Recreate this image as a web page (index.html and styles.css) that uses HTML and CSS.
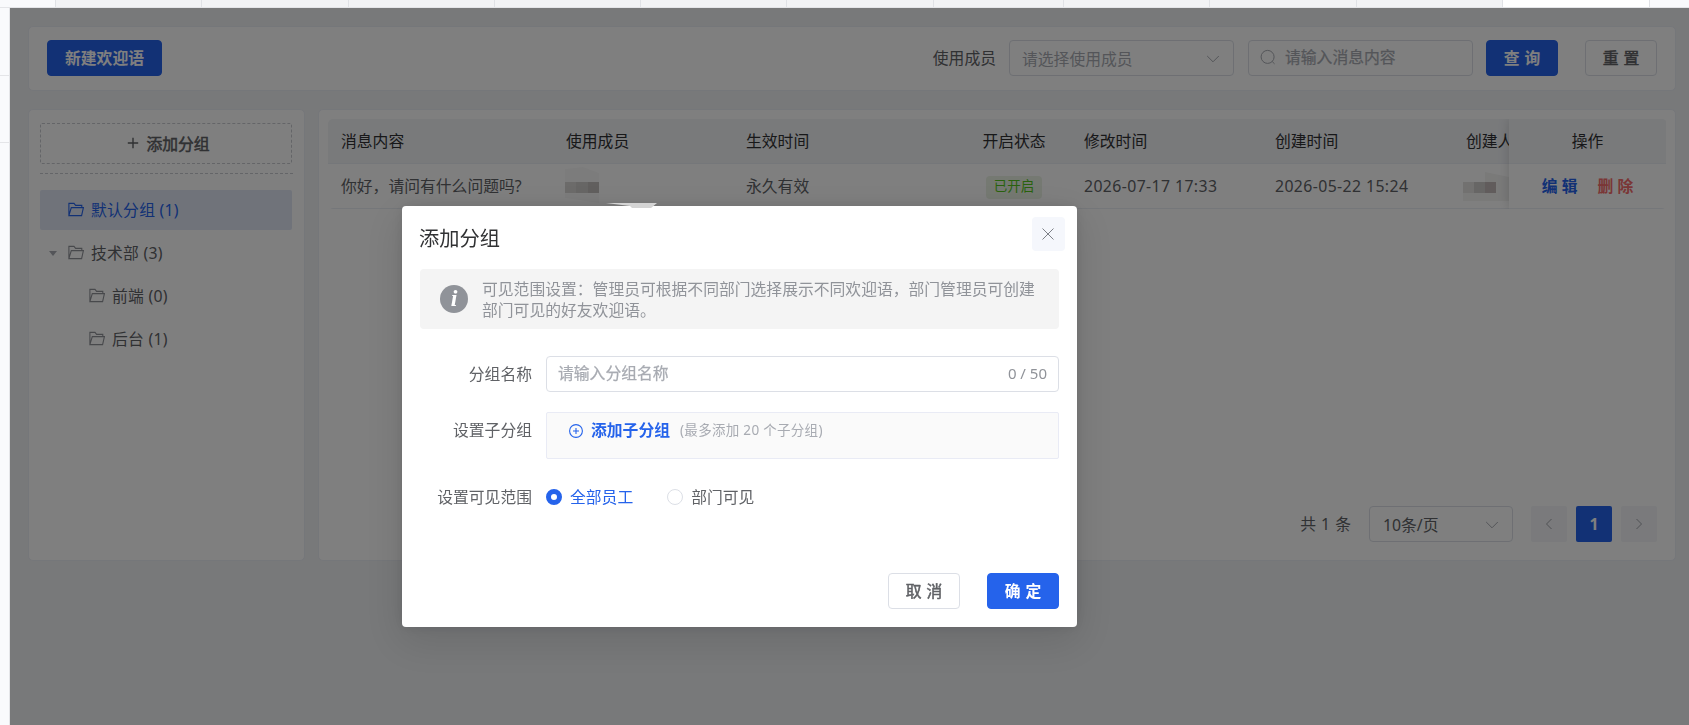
FILE: index.html
```html
<!DOCTYPE html>
<html lang="zh-CN">
<head>
  <meta charset="UTF-8">
  <title>好友欢迎语</title>
  <meta name="viewport" content="width=device-width, initial-scale=1.0">
  <link rel="stylesheet" href="styles.css">
</head>
<body>

  <svg class="sprite" width="0" height="0">
    <symbol id="folder" viewBox="0 0 16 16">
      <path d="M2.6 13.6 H.9 V1.4 H6 L7.6 3.4 H13.8 V5.2 M.9 13.6 L3.3 5.6 H15.4 L13.6 13.6 Z" fill="none" stroke="currentColor" stroke-width="1.1"/>
    </symbol>
    <symbol id="down" viewBox="0 0 14 14">
      <path d="M1.2 4 L7 9.8 L12.8 4" fill="none" stroke="currentColor"/>
    </symbol>
  </svg>

  <div class="tabs">
    <span class="w55 light"></span><span class="w146"></span><span class="w147"></span><span class="w146"></span><span class="w146"></span><span class="w146"></span><span class="w147"></span><span class="w130"></span><span class="w146"></span><span class="w147"></span><span class="w146"></span><span class="w147 active"></span><span class="rest light"></span>
  </div>

  <div class="layout">
    <aside class="rail"><i></i><i></i></aside>

    <main>
      <section class="card search">
        <button class="btn primary">新建欢迎语</button>
        <div class="filters">
          <label>使用成员</label>
          <div class="input select"><span>请选择使用成员</span><svg class="arrow"><use href="#down"/></svg></div>
          <div class="input keyword">
            <svg class="magnifier" viewBox="0 0 16 16"><circle cx="7.6" cy="7.9" r="6.5" fill="none" stroke="currentColor"/><path d="M12.2 12.5 L14.6 14.9" stroke="currentColor"/></svg>
            <span>请输入消息内容</span>
          </div>
          <button class="btn primary two">查 询</button>
          <button class="btn two reset">重 置</button>
        </div>
      </section>

      <div class="content">
        <section class="card groups">
          <button class="add"><svg viewBox="0 0 12 12"><path d="M6 .8 V11.2 M.8 6 H11.2" stroke="currentColor" stroke-width="1.4"/></svg>添加分组</button>
          <hr>
          <ul class="tree">
            <li class="current"><svg><use href="#folder"/></svg>默认分组 (1)</li>
            <li><b class="caret"></b><svg><use href="#folder"/></svg>技术部 (3)</li>
            <li class="child"><svg><use href="#folder"/></svg>前端 (0)</li>
            <li class="child"><svg><use href="#folder"/></svg>后台 (1)</li>
          </ul>
        </section>

        <section class="card list">
          <div class="table">
            <div class="scroll">
              <div class="tr th">
                <span>消息内容</span><span>使用成员</span><span>生效时间</span><span class="center">开启状态</span><span>修改时间</span><span>创建时间</span><span>创建人</span>
              </div>
              <div class="tr">
                <span>你好，请问有什么问题吗?</span>
                <span><svg class="mosaic" width="34" height="38"><path d="M0 2 L18 0 L34 6 V36 L0 31 Z" fill="#f9f9f9"/><path d="M0 15 H11 V26 H0 Z" fill="#d8d7d5"/><path d="M11 15 H23 V26 H11 Z" fill="#cecdca"/><path d="M23 15 H34 V26 H23 Z" fill="#c2bfbc"/></svg></span>
                <span>永久有效</span>
                <span class="center"><em class="tag">已开启</em></span>
                <span class="date">2026-07-17 17:33</span>
                <span class="date">2026-05-22 15:24</span>
                <span><svg class="mosaic creator" width="46" height="38"><path d="M0 15 H22 V5 L46 10 V34 H0 Z" fill="#f4f4f3"/><path d="M0 15 H11 V26 H0 Z" fill="#e4e2e1"/><path d="M11 15 H22 V26 H11 Z" fill="#cfcccb"/><path d="M22 15 H33 V26 H22 Z" fill="#c2b8b8"/></svg></span>
              </div>
            </div>
            <div class="fixed">
              <div class="tr th"><span>操作</span></div>
              <div class="tr"><a class="edit">编 辑</a><a class="del">删 除</a></div>
            </div>
          </div>

          <div class="pagination">
            <span class="total">共 1 条</span>
            <div class="input size"><span>10条/页</span><svg class="arrow"><use href="#down"/></svg></div>
            <button class="page"><svg viewBox="0 0 12 12"><path d="M8.5 1 L3.5 6 L8.5 11" fill="none" stroke="currentColor"/></svg></button>
            <button class="page on">1</button>
            <button class="page"><svg viewBox="0 0 12 12"><path d="M3.5 1 L8.5 6 L3.5 11" fill="none" stroke="currentColor"/></svg></button>
          </div>
        </section>
      </div>
    </main>
  </div>

  <div class="mask">
    <div class="dialog">
      <svg class="smudge" width="52" height="6"><path d="M0 0 H51 L45 5 H26 L24 3 Z" fill="#d4d4d4"/></svg>
      <header>
        <h2>添加分组</h2>
        <button class="close"><svg viewBox="0 0 12 12"><path d="M.5 .5 L11.5 11.5 M11.5 .5 L.5 11.5" stroke="currentColor"/></svg></button>
      </header>

      <div class="alert">
        <i class="info">i</i>
        <p>可见范围设置：管理员可根据不同部门选择展示不同欢迎语，部门管理员可创建部门可见的好友欢迎语。</p>
      </div>

      <div class="field name">
        <label>分组名称</label>
        <div class="input"><span>请输入分组名称</span><small>0 / 50</small></div>
      </div>
      <div class="field sub">
        <label>设置子分组</label>
        <div class="box">
          <svg viewBox="0 0 14 14"><circle cx="7" cy="7" r="6.4" fill="none" stroke="currentColor" stroke-width="1.1"/><path d="M7 4 V10 M4 7 H10" stroke="currentColor" stroke-width="1.1"/></svg>
          <b>添加子分组</b><small>(最多添加 20 个子分组)</small>
        </div>
      </div>
      <div class="field scope">
        <label>设置可见范围</label>
        <span class="radio checked"><i></i>全部员工</span>
        <span class="radio"><i></i>部门可见</span>
      </div>

      <footer>
        <button class="btn two">取 消</button>
        <button class="btn primary two">确 定</button>
      </footer>
    </div>
  </div>

</body>
</html>
```

FILE: styles.css
```css
* {
  box-sizing: border-box;
}
body {
  margin: 0;
  height: 725px;
  overflow: hidden;
  font-family: "Noto Sans", "Noto Sans CJK SC", sans-serif;
  font-size: 15.8px;
  line-height: 22px;
  color: #606266;
  background: #f0f2f5;
}
button {
  font-family: inherit;
  font-size: inherit;
  padding: 0;
}
svg {
  flex: none;
}
.sprite {
  position: absolute;
}

/* tab strip and menu rail */
.tabs {
  display: flex;
  height: 8px;
  border-bottom: 1px solid #e4e5e8;
}
.tabs span {
  border-right: 1px solid #e0e2e6;
  background: #f2f3f5;
}
.tabs .light { background: #f9fafc; }
.tabs .active { background: #fff; }
.w55 { width: 56px; }
.w130 { width: 130px; }
.w146 { width: 146px; }
.w147 { width: 147px; }
.tabs .rest {
  flex: 1;
  border-right: none;
}
.layout {
  display: flex;
  height: 717px;
}
.rail {
  width: 10px;
  flex: none;
  background: #f9fafc;
  border-right: 1px solid #e4e5e8;
}
.rail i {
  display: block;
  height: 67px;
  border-bottom: 1px solid #e4e5e8;
}
.rail i:first-child { height: 68px; }

main {
  flex: 1;
  padding: 18px 13px 0 18px;
}
.card {
  background: #fff;
  border: 1px solid #ebeef5;
  border-radius: 5px;
}
.search {
  height: 65px;
  padding: 0 18px 2px;
  display: flex;
  align-items: center;
  justify-content: space-between;
}
.filters {
  display: flex;
  align-items: center;
}
.filters label {
  margin-right: 13px;
}
.btn {
  height: 36px;
  border: 1px solid #dcdfe6;
  border-radius: 4px;
  background: #fff;
  color: #606266;
  -webkit-text-stroke: 0.5px;
  padding: 0 17px 1px;
}
.btn.primary {
  background: #2563eb;
  border-color: #2563eb;
  color: #fff;
  font-weight: 700;
  -webkit-text-stroke: 0;
}
.btn.two {
  width: 72px;
  padding: 0 0 1px;
  word-spacing: 1px;
}
.dialog .btn.two { padding-bottom: 2px; }
.btn.reset {
  margin-left: 27px;
}
.input {
  display: flex;
  align-items: center;
  height: 36px;
  border: 1px solid #dcdfe6;
  border-radius: 4px;
  padding: 0 11px 1px;
  color: #a8abb2;
  background: #fff;
}
.arrow {
  width: 14px;
  height: 14px;
  margin-left: auto;
}
.select {
  width: 225px;
  padding: 2px 13px 0 12px;
}
.keyword {
  width: 225px;
  margin: 0 13px 0 14px;
}
.keyword span {
  -webkit-text-stroke: 0.25px;
}
.magnifier {
  width: 16px;
  height: 16px;
  margin-right: 9px;
}

.content {
  display: flex;
  gap: 13px;
  margin-top: 18px;
}
.groups {
  width: 277px;
  height: 452px;
  padding: 13px 11px;
}
.add {
  display: flex;
  align-items: center;
  justify-content: center;
  gap: 7px;
  width: 252px;
  height: 41px;
  padding: 0 0 1px 5px;
  border: 1px dashed #c8cad0;
  border-radius: 2px;
  background: #fff;
  color: #606266;
  -webkit-text-stroke: 0.5px;
}
.add svg {
  width: 12px;
  height: 12px;
}
.groups hr {
  border: none;
  border-top: 1px dashed #c8cad0;
  margin: 9px 0 16px;
}
.tree {
  list-style: none;
  margin: 0;
  padding: 0;
}
.tree li {
  position: relative;
  display: flex;
  align-items: center;
  gap: 7px;
  width: 252px;
  height: 40px;
  margin-bottom: 3px;
  padding-left: 28px;
  border-radius: 2px;
  letter-spacing: 0.25px;
}
.tree svg {
  width: 16px;
  height: 16px;
  color: #909399;
}
.tree .current {
  background: #e1e7f5;
  color: #2563eb;
}
.tree .current svg { color: #2563eb; }
.tree .child { padding-left: 49px; }
.caret {
  position: absolute;
  left: 9px;
  border: 4.5px solid transparent;
  border-top: 5px solid #a8abb2;
  border-bottom: none;
}

.list {
  flex: 1;
  min-width: 0;
  height: 452px;
  padding: 9px 8px 8px 9px;
  display: flex;
  flex-direction: column;
  justify-content: space-between;
}
.table {
  display: flex;
  border-radius: 5px;
  overflow: hidden;
}
.scroll {
  width: 1181px;
  overflow: hidden;
}
.scroll .tr {
  display: grid;
  grid-template-columns: 225px 180px 224px 114px 191px 191px 120px;
}
.tr {
  height: 45px;
  align-items: center;
  border-bottom: 1px solid #ebeef5;
}
.tr > span {
  padding-left: 13px;
  white-space: nowrap;
}
.tr .center {
  padding: 0;
  text-align: center;
}
.th {
  background: #f2f4f7;
  color: #303133;
}
.date { letter-spacing: 0.4px; }
.fixed {
  width: 157px;
  box-shadow: 0 0 11px rgba(0, 0, 0, 0.16);
  clip-path: inset(0 0 0 -12px);
}
.fixed .tr {
  display: flex;
  justify-content: center;
  gap: 20px;
}
.fixed .tr > span { padding: 0; }
.fixed a {
  font-weight: 700;
}
.edit { color: #2563eb; }
.del {
  color: #f56c6c;
}
.mosaic {
  display: block;
  margin-left: -1px;
}
.creator { margin-left: -3px; }
.tag {
  display: inline-block;
  height: 23px;
  line-height: 21px;
  padding: 0 8px;
  border-radius: 4px;
  background: #ebf3e4;
  color: #52c41a;
  font-size: 13.5px;
  font-style: normal;
}

.pagination {
  display: flex;
  align-items: center;
  justify-content: flex-end;
  padding: 0 10px 10px 0;
}
.total {
  margin-right: 18px;
  word-spacing: 1px;
}
.size {
  width: 144px;
  margin-right: 18px;
  padding: 1px 13px 0;
}
.size span { color: #606266; }
.page {
  width: 36px;
  height: 36px;
  margin-left: 9px;
  border: none;
  border-radius: 2px;
  background: #f4f5f8;
  color: #a0a3aa;
  font-weight: 700;
}
.size + .page { margin-left: 0; }
.page svg {
  width: 12px;
  height: 12px;
}
.page.on {
  background: #2563eb;
  color: #fff;
}

/* add group dialog */
.mask {
  position: fixed;
  top: 8px;
  left: 10px;
  right: 0;
  bottom: 0;
  background: rgba(0, 0, 0, 0.5);
}
.dialog {
  position: relative;
  width: 675px;
  height: 421px;
  margin: 198px 0 0 392px;
  padding: 0 18px;
  background: #fff;
  border-radius: 4px;
  box-shadow: 0 13px 40px 5px rgba(0, 0, 0, 0.1), 0 0 14px rgba(0, 0, 0, 0.1);
}
.smudge {
  position: absolute;
  left: 204px;
  top: -3px;
}
.dialog header {
  display: flex;
  justify-content: space-between;
  height: 63px;
}
.dialog h2 {
  margin: 18px 0 0 -1px;
  font-size: 20.25px;
  line-height: 29px;
  font-weight: 400;
  color: #303133;
}
.close {
  width: 33px;
  height: 34px;
  margin: 11px -6px 0 0;
  padding: 0 2px 1px 0;
  border: none;
  border-radius: 4px;
  background: #f5f7fc;
  color: #7d8087;
}
.close svg {
  width: 12px;
  height: 12px;
}
.alert {
  display: flex;
  align-items: center;
  height: 60px;
  width: 639px;
  padding: 0 20px;
  border-radius: 4px;
  background: #f4f4f4;
  color: #909399;
}
.info {
  flex: none;
  width: 28px;
  height: 28px;
  margin-right: 14px;
  border-radius: 50%;
  background: #909399;
  color: #fff;
  font: italic bold 24px/27px "Liberation Serif", serif;
  text-align: center;
}
.alert p {
  width: 556px;
  margin: 1px 0 0;
  line-height: 20.5px;
}
.field {
  display: flex;
}
.field label {
  width: 112px;
  margin-right: 14px;
  line-height: 36px;
  text-align: right;
}
.field.name { margin-top: 27px; }
.field .input {
  width: 513px;
}
.field .input span {
  margin-top: -2px;
  -webkit-text-stroke: 0.25px;
}
.field .input small {
  margin: -1px 0 0 auto;
  font-size: 15px;
  color: #909399;
}
.sub { margin-top: 20px; }
.box {
  display: flex;
  width: 513px;
  height: 47px;
  padding: 0 22px;
  border: 1px solid #e9ebf5;
  border-radius: 2px;
  background: #fafafa;
  color: #2563eb;
  line-height: 35px;
}
.box svg {
  width: 14px;
  height: 14px;
  margin: 11px 8px 0 0;
}
.box small {
  margin-left: 10px;
  font-size: 13.5px;
  letter-spacing: 0.3px;
  color: #a8abb2;
}
.scope { margin-top: 20px; }
.radio {
  display: flex;
  align-items: center;
  margin-right: 34px;
}
.radio i {
  width: 16px;
  height: 16px;
  margin-right: 8px;
  border: 1px solid #dcdfe6;
  border-radius: 50%;
}
.checked { color: #2563eb; }
.checked i { border: 5.5px solid #2563eb; }
.dialog footer {
  display: flex;
  justify-content: flex-end;
  gap: 27px;
  margin-top: 58px;
}
```
